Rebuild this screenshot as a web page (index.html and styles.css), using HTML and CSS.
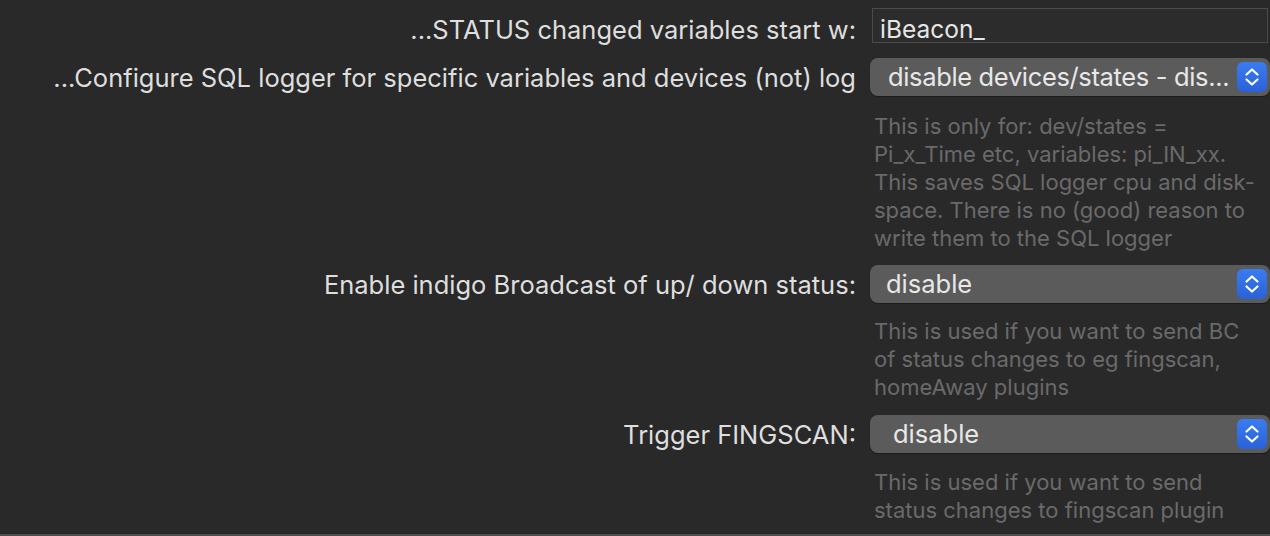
FILE: index.html
```html
<!DOCTYPE html>
<html>
<head>
<meta charset="utf-8">
<link rel="stylesheet" href="styles.css">
</head>
<body>
<div class="form">
  <div class="label row1">...STATUS changed variables start w:</div>
  <div class="control row1"><div class="field"><span class="field-text">iBeacon_</span></div></div>

  <div class="label row2">...Configure SQL logger for specific variables and devices (not) log</div>
  <div class="control row2">
    <div class="popup"><span class="popup-text tight">disable devices/states - dis...</span>
      <span class="stepper"><svg width="30" height="30" viewBox="0 0 30 30"><path d="M9.5 12.5 L15 7.5 L20.5 12.5 M9.5 17.5 L15 22.5 L20.5 17.5" fill="none" stroke="#fff" stroke-width="2.2" stroke-linecap="round" stroke-linejoin="round"/></svg></span>
    </div>
  </div>
  <div class="spacer"></div>
  <div class="help help1">This is only for: dev/states =<br>Pi_x_Time etc, variables: pi_IN_xx.<br>This saves SQL logger cpu and disk-<br>space. There is no (good) reason to<br>write them to the SQL logger</div>

  <div class="label row3">Enable indigo Broadcast of up/ down status:</div>
  <div class="control row3">
    <div class="popup"><span class="popup-text">disable</span>
      <span class="stepper"><svg width="30" height="30" viewBox="0 0 30 30"><path d="M9.5 12.5 L15 7.5 L20.5 12.5 M9.5 17.5 L15 22.5 L20.5 17.5" fill="none" stroke="#fff" stroke-width="2.2" stroke-linecap="round" stroke-linejoin="round"/></svg></span>
    </div>
  </div>
  <div class="spacer"></div>
  <div class="help help2">This is used if you want to send BC<br>of status changes to eg fingscan,<br>homeAway plugins</div>

  <div class="label row4">Trigger FINGSCAN:</div>
  <div class="control row4">
    <div class="popup"><span class="popup-text indent">disable</span>
      <span class="stepper"><svg width="30" height="30" viewBox="0 0 30 30"><path d="M9.5 12.5 L15 7.5 L20.5 12.5 M9.5 17.5 L15 22.5 L20.5 17.5" fill="none" stroke="#fff" stroke-width="2.2" stroke-linecap="round" stroke-linejoin="round"/></svg></span>
    </div>
  </div>
  <div class="spacer"></div>
  <div class="help help3">This is used if you want to send<br>status changes to fingscan plugin</div>
</div>
<div class="bottom-line"></div>
</body>
</html>
```
FILE: styles.css
```css
html, body {
  margin: 0;
  padding: 0;
  background: #292929;
  width: 1270px;
  height: 536px;
  overflow: hidden;
  font-family: "Inter", "Noto Sans", sans-serif;
}
.form {
  display: grid;
  grid-template-columns: 856px 400px;
  column-gap: 14px;
  align-items: center;
  padding-top: 8px;
}
.label {
  text-align: right;
  color: #dedede;
  font-size: 25.5px;
  line-height: 30px;
  white-space: nowrap;
  padding-top: 2px;
}
.row1 { align-self: start; }
.row1.label { padding-top: 7px; }
.row2 { margin-top: 13px; }
.row3 { margin-top: 13px; }
.row4 { margin-top: 14px; }
.field {
  margin-left: 2px;
  height: 33px;
  border: 1px solid #4a4a4a;
  background: #2c2c2c;
  padding: 0 7px;
  box-sizing: content-box;
  width: 380px;
  display: flex;
  align-items: flex-end;
}
.field-text {
  color: #e6e6e6;
  font-size: 24.5px;
  line-height: 24px;
  padding-bottom: 1px;
}
.popup {
  height: 38px;
  background: #5b5b5b;
  border-radius: 8px;
  display: flex;
  align-items: center;
  justify-content: space-between;
  box-shadow: 0 1px 1px rgba(0,0,0,0.35);
}
.popup-text {
  color: #e8e8e8;
  font-size: 25.5px;
  padding-left: 16px;
  padding-bottom: 2px;
  white-space: nowrap;
}
.popup-text.tight { letter-spacing: -0.35px; padding-left: 18px; }
.popup-text.indent { padding-left: 23px; }
.stepper {
  width: 30px;
  height: 30px;
  margin-right: 3px;
  border-radius: 6px;
  background: linear-gradient(#3a7cf0, #2a62d8);
  display: flex;
}
.help {
  color: #6a6a6a;
  font-size: 22px;
  line-height: 28px;
  padding-left: 4px;
  white-space: nowrap;
}
.help1 { margin-top: 16px; }
.help2 { margin-top: 14px; }
.help3 { margin-top: 15px; }
.bottom-line {
  position: absolute;
  left: 0;
  top: 534px;
  width: 1270px;
  height: 2px;
  background: #4d4d4d;
}
```
